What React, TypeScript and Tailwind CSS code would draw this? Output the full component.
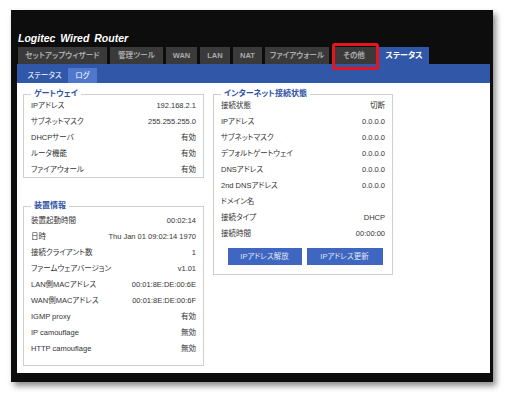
const font = "font-['Liberation_Sans','Noto_Sans_CJK_JP',sans-serif]"

const gateway: [string, string][] = [
  ['IPアドレス', '192.168.2.1'],
  ['サブネットマスク', '255.255.255.0'],
  ['DHCPサーバ', '有効'],
  ['ルータ機能', '有効'],
  ['ファイアウォール', '有効'],
]

const device: [string, string][] = [
  ['装置起動時間', '00:02:14'],
  ['日時', 'Thu Jan 01 09:02:14 1970'],
  ['接続クライアント数', '1'],
  ['ファームウェアバージョン', 'v1.01'],
  ['LAN側MACアドレス', '00:01:8E:DE:00:6E'],
  ['WAN側MACアドレス', '00:01:8E:DE:00:6F'],
  ['IGMP proxy', '有効'],
  ['IP camouflage', '無効'],
  ['HTTP camouflage', '無効'],
]

const internet: [string, string][] = [
  ['接続状態', '切断'],
  ['IPアドレス', '0.0.0.0'],
  ['サブネットマスク', '0.0.0.0'],
  ['デフォルトゲートウェイ', '0.0.0.0'],
  ['DNSアドレス', '0.0.0.0'],
  ['2nd DNSアドレス', '0.0.0.0'],
  ['ドメイン名', ''],
  ['接続タイプ', 'DHCP'],
  ['接続時間', '00:00:00'],
]

const tabs = [
  { label: 'セットアップウィザード', w: 'w-[89px]' },
  { label: '管理ツール', w: 'w-[53px]' },
  { label: 'WAN', w: 'w-[31px]' },
  { label: 'LAN', w: 'w-[30px]' },
  { label: 'NAT', w: 'w-[29px]' },
  { label: 'ファイアウォール', w: 'w-[64px]' },
  { label: 'その他', w: 'w-[44px]' },
]

function Rows({ rows }: { rows: [string, string][] }) {
  return (
    <>
      {rows.map(([k, v]) => (
        <div key={k} className="flex h-[16px] items-center justify-between">
          <span>{k}</span>
          <span>{v}</span>
        </div>
      ))}
    </>
  )
}

function Box({ title, className, children }: { title: string; className: string; children: React.ReactNode }) {
  return (
    <div className={`relative border border-[#cfcfcf] ${className}`}>
      <span className="absolute -top-[6px] left-[7px] bg-white px-[3px] text-[8px] leading-[10px] font-bold text-[#2f53a6]">
        {title}
      </span>
      {children}
    </div>
  )
}

export default function App() {
  return (
    <div className={`min-h-screen bg-white pl-[11px] pt-[10px] ${font} [font-feature-settings:'palt']`}>
      <div className="flex h-[372px] w-[482px] flex-col bg-[#0d0d0d] pl-[6px] pr-[3px] pb-[9px] shadow-[3px_4px_6px_rgba(0,0,0,0.45)]">
        {/* Header */}
        <div className="h-[37px] pt-[15px] pl-[1px]">
          <span className="text-[10.5px] leading-[12px] font-bold italic text-white [word-spacing:2px]">
            Logitec Wired Router
          </span>
        </div>

        {/* Main tabs */}
        <div className="relative flex h-[17px] gap-[3px] pl-[1px]">
          {tabs.map((t) => (
            <div
              key={t.label}
              className={`${t.w} flex items-center justify-center bg-[#3a3a3a] text-[7.5px] font-semibold text-[#a9a9a9]`}
            >
              {t.label}
            </div>
          ))}
          <div className="flex w-[50px] items-center justify-center bg-[#3157a8] text-[8px] font-bold text-white">
            ステータス
          </div>
          {/* highlight */}
          <div className="absolute left-[315px] -top-[4px] h-[27px] w-[47px] rounded-[3px] border-[3px] border-[#e8141c]" />
        </div>

        {/* Sub tabs */}
        <div className="flex h-[19px] items-end bg-[#3157a8] pl-[4px] text-[7.5px] text-white">
          <div className="flex h-[15px] w-[47px] items-center justify-center">ステータス</div>
          <div className="flex h-[15px] w-[29px] items-center justify-center bg-[#4f77cc]">ログ</div>
        </div>

        {/* Content */}
        <div className="flex flex-1 gap-[9px] bg-white pl-[6px] pt-[11px] text-[7.5px] text-[#333]">
          <div className="flex w-[181px] flex-col">
            <Box title="ゲートウェイ" className="h-[84px] px-[7px] pt-[3px]">
              <Rows rows={gateway} />
            </Box>
            <Box title="装置情報" className="mt-[28px] h-[160px] px-[7px] pt-[6px]">
              <Rows rows={device} />
            </Box>
          </div>
          <div className="w-[180px]">
            <Box title="インターネット接続状態" className="h-[181px] px-[7px] pt-[3px]">
              <Rows rows={internet} />
              <div className="mt-[6px] flex justify-center gap-[5px] pl-[4px]">
                <button className="h-[17px] w-[74px] bg-[#3f66c0] text-[7.5px] text-[#dfe6f6]">IPアドレス解放</button>
                <button className="h-[17px] w-[76px] bg-[#3f66c0] text-[7.5px] text-[#dfe6f6]">IPアドレス更新</button>
              </div>
            </Box>
          </div>
        </div>
      </div>
    </div>
  )
}
